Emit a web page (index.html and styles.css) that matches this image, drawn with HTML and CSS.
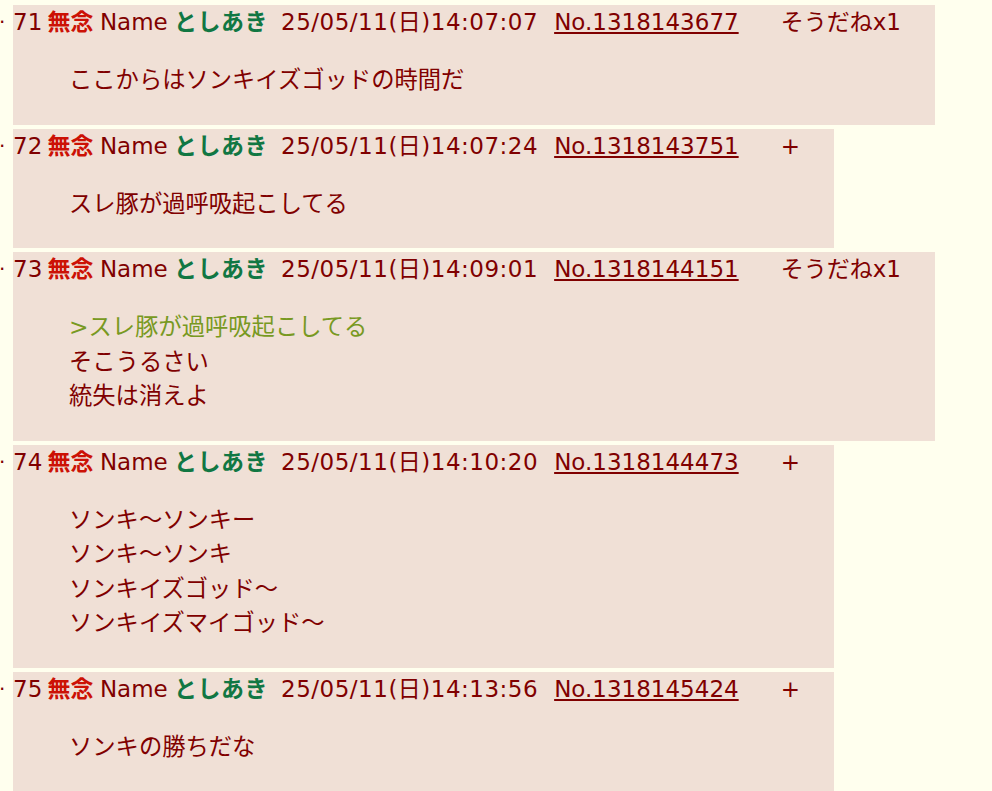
FILE: index.html
```html
<!DOCTYPE html>
<html lang="ja">
<head>
    <meta charset="UTF-8">
    <title>スレッド</title>
    <link rel="stylesheet" href="styles.css">
</head>
<body>
    <div class="thre">
        <div class="res">
            <div class="rts">·</div>
            <div class="rtd">
                <div class="rhead">
                    <span class="rsc">71</span> <span class="csb">無念</span> Name <span class="cnm">としあき</span><span class="cnw">25/05/11(日)14:07:07</span><a class="cno" href="#">No.1318143677</a><a class="sod" href="#">そうだねx1</a>
                </div>
                <blockquote>ここからはソンキイズゴッドの時間だ</blockquote>
            </div>
        </div>
        <div class="res">
            <div class="rts">·</div>
            <div class="rtd">
                <div class="rhead">
                    <span class="rsc">72</span> <span class="csb">無念</span> Name <span class="cnm">としあき</span><span class="cnw">25/05/11(日)14:07:24</span><a class="cno" href="#">No.1318143751</a><a class="sod" href="#">+</a>
                </div>
                <blockquote>スレ豚が過呼吸起こしてる</blockquote>
            </div>
        </div>
        <div class="res">
            <div class="rts">·</div>
            <div class="rtd">
                <div class="rhead">
                    <span class="rsc">73</span> <span class="csb">無念</span> Name <span class="cnm">としあき</span><span class="cnw">25/05/11(日)14:09:01</span><a class="cno" href="#">No.1318144151</a><a class="sod" href="#">そうだねx1</a>
                </div>
                <blockquote><span class="quote">&gt;スレ豚が過呼吸起こしてる</span><br>そこうるさい<br>統失は消えよ</blockquote>
            </div>
        </div>
        <div class="res">
            <div class="rts">·</div>
            <div class="rtd">
                <div class="rhead">
                    <span class="rsc">74</span> <span class="csb">無念</span> Name <span class="cnm">としあき</span><span class="cnw">25/05/11(日)14:10:20</span><a class="cno" href="#">No.1318144473</a><a class="sod" href="#">+</a>
                </div>
                <blockquote>ソンキ～ソンキー<br>ソンキ～ソンキ<br>ソンキイズゴッド～<br>ソンキイズマイゴッド～</blockquote>
            </div>
        </div>
        <div class="res">
            <div class="rts">·</div>
            <div class="rtd">
                <div class="rhead">
                    <span class="rsc">75</span> <span class="csb">無念</span> Name <span class="cnm">としあき</span><span class="cnw">25/05/11(日)14:13:56</span><a class="cno" href="#">No.1318145424</a><a class="sod" href="#">+</a>
                </div>
                <blockquote>ソンキの勝ちだな</blockquote>
            </div>
        </div>
    </div>
</body>
</html>
```
FILE: styles.css
```css
* {
    padding: 0;
    margin: 0;
}
body {
    background-color: #ffffee;
    color: #800000;
    font-family: "DejaVu Sans", "Noto Sans CJK JP", sans-serif;
    font-size: 23px;
    padding-top: 5px;
}
.thre {
    display: flex;
    flex-direction: column;
    gap: 4px;
}
.res {
    display: flex;
    align-items: flex-start;
}
.rts {
    width: 14px;
    margin-left: -1px;
    line-height: 34px;
    font-size: 20px;
}
.rtd {
    background-color: #f0e0d6;
    padding: 0 34px 0 0;
}
.rhead {
    line-height: 34px;
    white-space: nowrap;
    word-spacing: -2px;
}
.csb {
    color: #cc1105;
    font-weight: bold;
    margin-right: 1px;
}
.cnm {
    color: #117743;
    font-weight: bold;
    margin-left: 1px;
    letter-spacing: 0.5px;
}
.cnw {
    margin-left: 13px;
    letter-spacing: 0.5px;
}
.cno {
    color: #800000;
    margin-left: 16px;
}
.sod {
    color: #800000;
    text-decoration: none;
    margin-left: 42px;
}
blockquote {
    margin: 24px 0 27px 56px;
    line-height: 34.5px;
    font-size: 23.3px;
}
.quote {
    color: #789922;
}
```
